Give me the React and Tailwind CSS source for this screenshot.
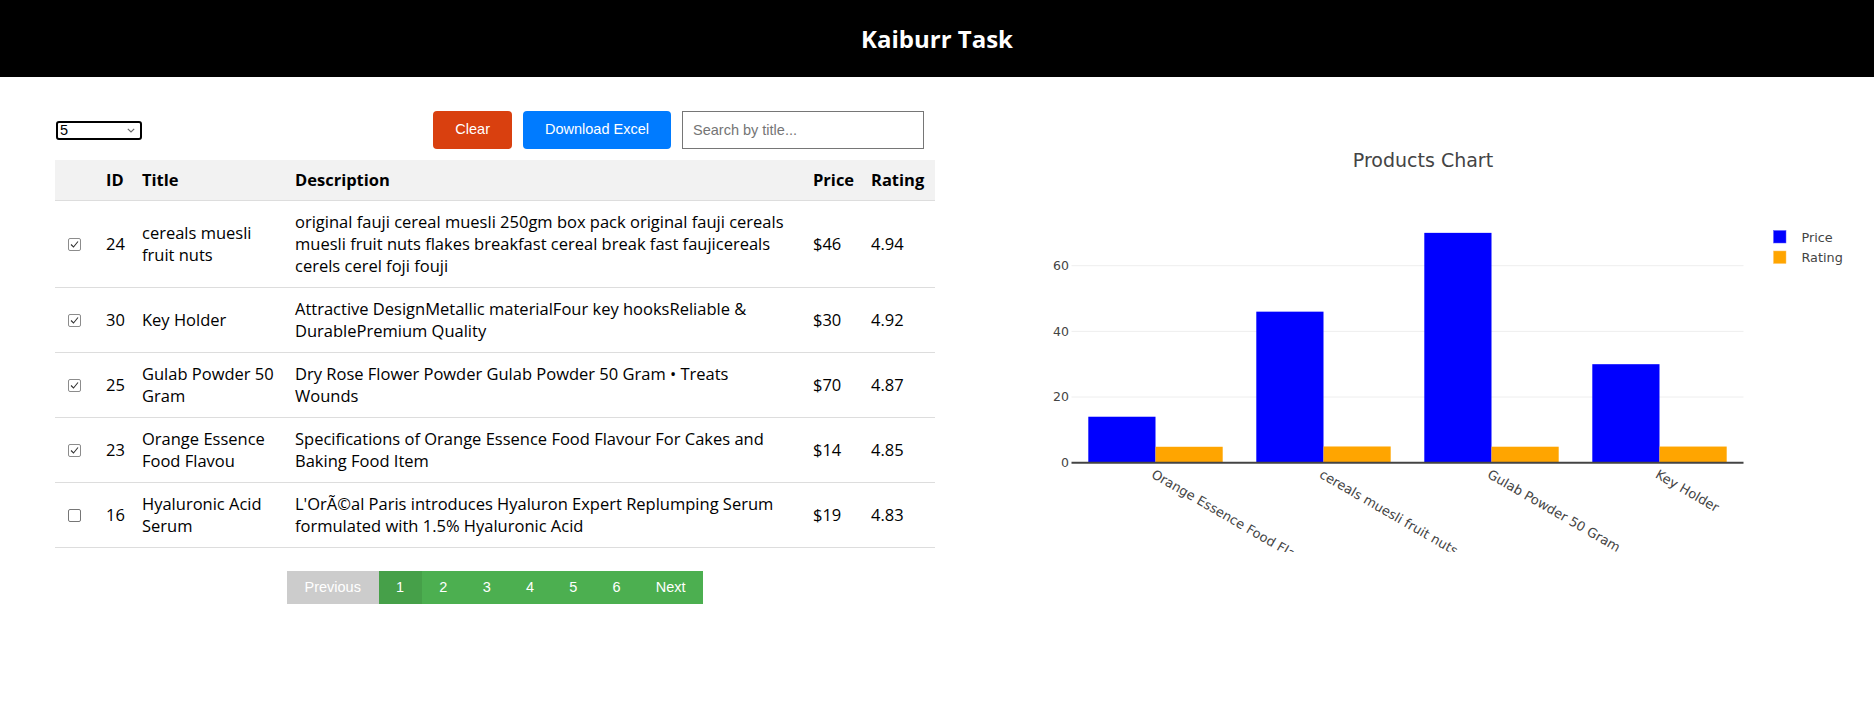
import React from 'react'

const products = [
  { id: 24, title: 'cereals muesli fruit nuts', description: 'original fauji cereal muesli 250gm box pack original fauji cereals muesli fruit nuts flakes breakfast cereal break fast faujicereals cerels cerel foji fouji', price: 46, rating: 4.94, checked: true },
  { id: 30, title: 'Key Holder', description: 'Attractive DesignMetallic materialFour key hooksReliable & DurablePremium Quality', price: 30, rating: 4.92, checked: true },
  { id: 25, title: 'Gulab Powder 50 Gram', description: 'Dry Rose Flower Powder Gulab Powder 50 Gram • Treats Wounds', price: 70, rating: 4.87, checked: true },
  { id: 23, title: 'Orange Essence Food Flavou', description: 'Specifications of Orange Essence Food Flavour For Cakes and Baking Food Item', price: 14, rating: 4.85, checked: true },
  { id: 16, title: 'Hyaluronic Acid Serum', description: "L'OrÃ©al Paris introduces Hyaluron Expert Replumping Serum formulated with 1.5% Hyaluronic Acid", price: 19, rating: 4.83, checked: false },
]

const chartData = [
  { name: 'Orange Essence Food Flavou', price: 14, rating: 4.85 },
  { name: 'cereals muesli fruit nuts', price: 46, rating: 4.94 },
  { name: 'Gulab Powder 50 Gram', price: 70, rating: 4.87 },
  { name: 'Key Holder', price: 30, rating: 4.92 },
]

const Checkbox = ({ checked }) => (
  <span className={`flex h-[13px] w-[13px] items-center justify-center rounded-[2px] border bg-white ${checked ? 'border-[#8c8c8c]' : 'border-[#767676]'}`}>
    {checked && (
      <svg width="11" height="11" viewBox="0 0 11 11">
        <path d="M2 5.5 L4.5 8 L9 2.5" fill="none" stroke="#333" strokeWidth="1.1" />
      </svg>
    )}
  </span>
)

function ProductsChart() {
  const left = 79.5
  const right = 751.5
  const zero = 360.7
  const unit = 3.2835
  const catW = (right - left) / chartData.length
  const barW = catW * 0.4
  const ticks = [20, 40, 60]
  const font = { fontFamily: '"DejaVu Sans", Verdana, sans-serif' }

  return (
    <svg width="866" height="450" viewBox="0 0 866 450" style={font}>
      <text x="431" y="65" textAnchor="middle" fontSize="19" fill="#444">Products Chart</text>
      {ticks.map((t) => (
        <line key={t} x1={left} x2={right} y1={zero - t * unit} y2={zero - t * unit} stroke="#eee" strokeWidth="1" />
      ))}
      {[0, ...ticks].map((t) => (
        <text key={t} x="77" y={zero - t * unit + 4.3} textAnchor="end" fontSize="12.5" fill="#444">{t}</text>
      ))}
      {chartData.map((d, i) => {
        const cx = left + catW * (i + 0.5)
        return (
          <g key={d.name}>
            <rect x={cx - barW} y={zero - d.price * unit} width={barW} height={d.price * unit} fill="#0000ff" />
            <rect x={cx} y={zero - d.rating * unit} width={barW} height={d.rating * unit} fill="#ffa500" />
            <text x={cx - 5} y="375" fontSize="13" fill="#444" transform={`rotate(30 ${cx - 5} 375)`}>{d.name}</text>
          </g>
        )
      })}
      <line x1={left} x2={right} y1={zero} y2={zero} stroke="#444" strokeWidth="2" />
      <rect x="781.5" y="128.5" width="12.5" height="12.5" fill="#0000ff" stroke="#5a5aff" strokeWidth="0.5" />
      <text x="809.5" y="139.5" fontSize="12.8" fill="#444">Price</text>
      <rect x="781.5" y="149" width="12.5" height="12.5" fill="#ffa500" stroke="#ffc266" strokeWidth="0.5" />
      <text x="809.5" y="160" fontSize="12.8" fill="#444">Rating</text>
    </svg>
  )
}

export default function App() {
  const pages = [1, 2, 3, 4, 5, 6]

  return (
    <div className="min-h-[704px] bg-white font-['Open_Sans',sans-serif] text-black">
      <header className="flex h-[77px] items-center justify-center bg-black">
        <h1 className="text-[24px] font-bold text-white">Kaiburr Task</h1>
      </header>

      <main className="flex">
        <div className="w-[935px] shrink-0 pl-[55px] pt-[34px]">
          <div className="flex items-center justify-between pr-[11px] font-['Liberation_Sans',Arial,sans-serif] text-[14.5px]">
            <div className="ml-px flex h-[19px] w-[86px] items-center justify-between rounded-[3px] border-2 border-black pl-[2px] pr-[5px] leading-none">
              <span>5</span>
              <svg width="8" height="5" viewBox="0 0 8 5">
                <path d="M0.8 0.8 L4 4 L7.2 0.8" fill="none" stroke="#6b6b6b" strokeWidth="1.2" />
              </svg>
            </div>
            <div className="flex items-center gap-[11px]">
              <button className="h-[38px] rounded-[4px] bg-[#d9400f] px-[22px] text-white">Clear</button>
              <button className="h-[38px] rounded-[4px] bg-[#007bff] px-[22px] text-white">Download Excel</button>
              <input
                className="h-[38px] w-[242px] border border-[#767676] px-[10px] outline-none placeholder:text-[#757575]"
                placeholder="Search by title..."
              />
            </div>
          </div>

          <table className="mt-[11px] w-[880px] table-fixed border-collapse text-[16.5px] leading-[22px]">
            <colgroup>
              <col className="w-[43px]" />
              <col className="w-[36px]" />
              <col className="w-[153px]" />
              <col className="w-[518px]" />
              <col className="w-[58px]" />
              <col className="w-[72px]" />
            </colgroup>
            <thead>
              <tr className="border-b border-[#dddddd] bg-[#f2f2f2] text-left">
                <th className="py-[9px]"></th>
                <th className="py-[9px] pl-2 font-bold">ID</th>
                <th className="py-[9px] pl-2 font-bold">Title</th>
                <th className="py-[9px] pl-2 font-bold">Description</th>
                <th className="py-[9px] pl-2 font-bold">Price</th>
                <th className="py-[9px] pl-2 font-bold">Rating</th>
              </tr>
            </thead>
            <tbody>
              {products.map((p) => (
                <tr key={p.id} className="border-b border-[#dddddd] align-middle">
                  <td className="py-[10px] pl-[13px]">
                    <Checkbox checked={p.checked} />
                  </td>
                  <td className="py-[10px] pl-2">{p.id}</td>
                  <td className="py-[10px] pl-2 pr-[5px]">{p.title}</td>
                  <td className="py-[10px] pl-2 pr-[16px]">{p.description}</td>
                  <td className="py-[10px] pl-2">${p.price}</td>
                  <td className="py-[10px] pl-2">{p.rating}</td>
                </tr>
              ))}
            </tbody>
          </table>

          <div className="mt-[23px] flex w-[880px] justify-center font-['Liberation_Sans',Arial,sans-serif] text-[14.5px] text-white">
            <button className="h-[33px] bg-[#cccccc] px-[17.6px]">Previous</button>
            {pages.map((n) => (
              <button key={n} className={`h-[33px] px-[17.6px] ${n === 1 ? 'bg-[#46a049]' : 'bg-[#4caf50]'}`}>{n}</button>
            ))}
            <button className="h-[33px] bg-[#4caf50] px-[17.6px]">Next</button>
          </div>
        </div>

        <div className="pl-[57px] pt-[25px]">
          <ProductsChart />
        </div>
      </main>
    </div>
  )
}
